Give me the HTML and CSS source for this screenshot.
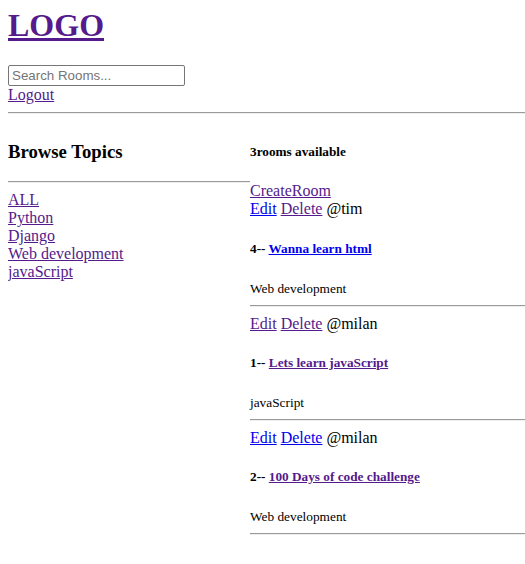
FILE: index.html
```html
<!DOCTYPE html>
<html lang="en">
<head>
<meta charset="utf-8">
<title>StudyBud</title>
<link rel="stylesheet" href="styles.css">
</head>
<body class="page">
  <header class="navbar">
    <a class="link visited" href="#"><h1 class="logo">LOGO</h1></a>
    <form class="search-form" action="#">
      <input class="search" type="text" name="q" placeholder="Search Rooms...">
    </form>
    <a class="link visited" href="#">Logout</a>
  </header>
  <hr class="rule">
  <div class="home">
    <aside class="topics">
      <h3 class="topics-title">Browse Topics</h3>
      <hr class="rule">
      <div class="topic-list">
        <div><a class="link visited" href="#">ALL</a></div>
        <div><a class="link visited" href="#">Python</a></div>
        <div><a class="link visited" href="#">Django</a></div>
        <div><a class="link visited" href="#">Web development</a></div>
        <div><a class="link visited" href="#">javaScript</a></div>
      </div>
    </aside>
    <main class="rooms">
      <h5 class="count">3rooms available</h5>
      <a class="link visited" href="#">CreateRoom</a>
      <div class="room">
        <div><a class="link" href="#">Edit</a> <a class="link visited" href="#">Delete</a> <span>@tim</span></div>
        <h5 class="room-title">4-- <a class="link" href="#">Wanna learn html</a></h5>
        <small class="room-topic">Web development</small>
        <hr class="rule">
      </div>
      <div class="room">
        <div><a class="link visited" href="#">Edit</a> <a class="link visited" href="#">Delete</a> <span>@milan</span></div>
        <h5 class="room-title">1-- <a class="link visited" href="#">Lets learn javaScript</a></h5>
        <small class="room-topic">javaScript</small>
        <hr class="rule">
      </div>
      <div class="room">
        <div><a class="link" href="#">Edit</a> <a class="link" href="#">Delete</a> <span>@milan</span></div>
        <h5 class="room-title">2-- <a class="link visited" href="#">100 Days of code challenge</a></h5>
        <small class="room-topic">Web development</small>
        <hr class="rule">
      </div>
    </main>
  </div>
</body>
</html>
```

FILE: styles.css
```css
html {
  background: #ffffff;
}

.page {
  margin: 7px 0 8px 8px;
  font-family: "Liberation Serif", "Times New Roman", serif;
  font-size: 16px;
  color: #000000;
  overflow-x: hidden;
}

.link {
  color: #0000ee;
  text-decoration: underline;
}

.link.visited {
  color: #551a8b;
}

.logo {
  margin: 0 0 21px;
  font-size: 32px;
  font-weight: bold;
}

.search-form {
  margin: 0;
}

.search {
  box-sizing: border-box;
  width: 177px;
  height: 21px;
  padding: 1px 3px;
  border: 1px solid #767676;
  border-radius: 2px;
  font-family: "Liberation Sans", Arial, sans-serif;
  font-size: 13.33px;
  color: #000;
  vertical-align: middle;
}

.search::placeholder {
  color: #757575;
}

.rule {
  margin: 8px 0;
  border: 0;
  border-top: 1px solid #9a9a9a;
  border-bottom: 1px solid #eeeeee;
  height: 0;
}

.home {
  display: grid;
  grid-template-columns: 242px 1fr;
}

.topics-title {
  font-size: 18.72px;
  margin: 18.72px 0;
}

.count {
  font-size: 13.28px;
  margin: 22.18px 0;
}

.room-title {
  font-size: 13.28px;
  margin: 22.18px 0;
}

.room-topic {
  font-size: 13.33px;
}
```
